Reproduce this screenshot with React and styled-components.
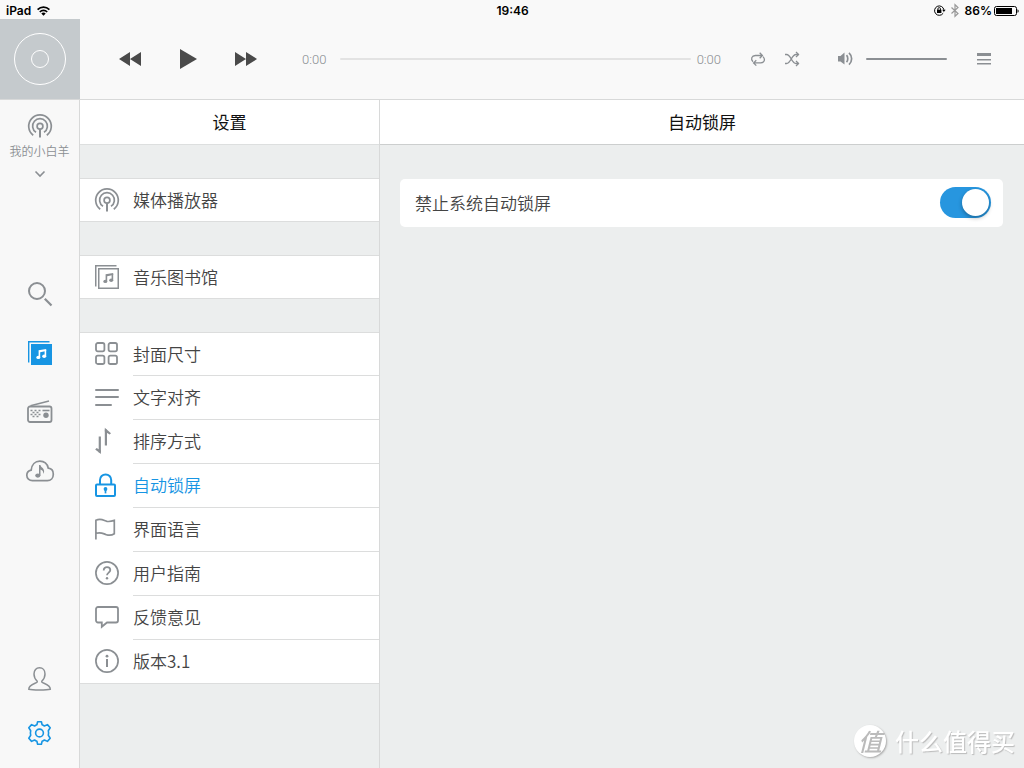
import React, { useState } from 'react';
import styled, { createGlobalStyle } from 'styled-components';

const GRAY = '#8b8f93';
const BLUE = '#1795e3';

/* ---------- icons ---------- */

const Icon = ({ w = 24, h = 24, sw = 2, children }) => (
    <svg width={w} height={h} viewBox={`0 0 ${w} ${h}`} fill="none" stroke="currentColor"
        strokeWidth={sw} overflow="visible" aria-hidden="true">
        {children}
    </svg>
);

const CastIcon = () => (
    <Icon sw={1.7}>
        <path d="M5.200 21.200A11.300 11.300 0 1 1 18.800 21.200" />
        <path d="M8 18.300A7.400 7.400 0 1 1 16 18.300" />
        <circle cx="12" cy="12.200" r="2.900" />
        <path d="M12 15v8.500" strokeWidth="2" />
    </Icon>
);

const NotePath = () => (
    <g stroke="none" fill="currentColor">
        <path d="M10.6 9.200L18.200 7.900v2.200l-6 1.200v5h-1.600z" />
        <path d="M16.600 9h1.600v6.200h-1.600z" />
        <ellipse cx="10.300" cy="16.400" rx="2" ry="1.700" />
        <ellipse cx="16.200" cy="15.200" rx="2" ry="1.700" />
    </g>
);

const AlbumIcon = () => (
    <Icon sw={1.5}>
        <path d="M.75 21.5V.75H21.5" />
        <rect x="3.75" y="3.75" width="19.5" height="19.5" />
        <NotePath />
    </Icon>
);

const AlbumFilledIcon = () => (
    <Icon sw={1.4}>
        <path d="M.7 21.5V.7H21.5" />
        <rect x="3" y="3" width="21" height="21" fill="currentColor" stroke="none" />
        <g color="#fff"><NotePath /></g>
    </Icon>
);

const GridIcon = () => (
    <Icon sw={1.8}>
        <rect x="1" y="1" width="8.4" height="8.4" rx="1.8" />
        <rect x="13.6" y="1" width="8.4" height="8.4" rx="1.8" />
        <rect x="1" y="13.6" width="8.4" height="8.4" rx="1.8" />
        <rect x="13.6" y="13.6" width="8.4" height="8.4" rx="1.8" />
    </Icon>
);

const AlignIcon = () => (
    <Icon>
        <path d="M1 5h22M1 12h22M1 20h15" strokeLinecap="round" />
    </Icon>
);

const SortIcon = () => (
    <Icon>
        <path d="M4.800 7.500v16" strokeWidth="2.200" />
        <path d="M5.900 25L.2 20.400l1.400-1.400 4.300 2.600z" fill="currentColor" stroke="none" />
        <path d="M10.900 16.500V.5" strokeWidth="2.200" />
        <path d="M9.800-1.200l6.200 5.400-1.400 1.400-4.800-3z" fill="currentColor" stroke="none" />
    </Icon>
);

const LockIcon = () => (
    <Icon>
        <rect x="1" y="11.5" width="19" height="11.5" rx="1" />
        <path d="M5 11V7a5.6 5.6 0 0 1 11.2 0v4" />
        <circle cx="10.5" cy="16" r="1.900" fill="currentColor" stroke="none" />
        <path d="M10.5 16v4.400" strokeWidth="1.700" />
    </Icon>
);

const FlagIcon = () => (
    <Icon sw={1.7}>
        <path d="M.9 22.4V3.2C6.5.8 9 3.8 12 4.400c2.600.4 5-.2 7.300-1v13.400c-2.500 1.600-5 1.800-8 .9-3-.9-5-3-10.200-1.400" />
    </Icon>
);

const HelpIcon = () => (
    <Icon sw={1.7}>
        <circle cx="12" cy="12" r="11.1" />
        <path d="M8.700 9.500C8.700 7.200 10.100 6.200 12 6.200s3.300 1.100 3.300 2.900c0 2.500-3.300 2.600-3.300 5.200" strokeWidth="1.8" />
        <circle cx="12" cy="17.300" r="1.200" fill="currentColor" stroke="none" />
    </Icon>
);

const ChatIcon = () => (
    <Icon sw={1.8}>
        <path d="M3 2h18a2 2 0 0 1 2 2v11.500a2 2 0 0 1-2 2H12l-5.200 4.300v-4.300H3a2 2 0 0 1-2-2V4a2 2 0 0 1 2-2z" />
    </Icon>
);

const InfoIcon = () => (
    <Icon sw={1.7}>
        <circle cx="12" cy="12" r="11.1" />
        <circle cx="12" cy="7.200" r="1.400" fill="currentColor" stroke="none" />
        <path d="M12 10v8" strokeWidth="2" />
    </Icon>
);

const SearchIcon = () => (
    <Icon>
        <circle cx="9" cy="9" r="8" />
        <path d="M16.800 16.800l6.700 6.700" strokeWidth="2.200" />
    </Icon>
);

const RadioIcon = () => (
    <Icon w={26} sw={1.8}>
        <path d="M3.500 5.800L22 1" strokeWidth="1.400" />
        <rect x="1" y="6.500" width="23.500" height="15.500" rx="2" />
        <path d="M3.500 10.500h10M3.500 14.500h10" strokeDasharray="2 2" strokeWidth="1.500" />
        <path d="M5.500 12.500h8M5.500 16.500h8" strokeDasharray="2 2" strokeWidth="1.500" />
        <path d="M15.500 10.500h7" strokeWidth="1.600" />
        <circle cx="19" cy="15.300" r="2.700" fill="currentColor" stroke="none" />
    </Icon>
);

const CloudIcon = () => (
    <Icon w={28} h={22} sw={1.7}>
        <path d="M6.500 20.700C3.200 20.700.8 18.400.8 15.300c0-2.700 1.800-4.700 4.400-5.200C5.700 4.700 9.200 1.200 13.800 1.200c4.300 0 7.500 2.700 8.500 7 3.100.3 5 2.900 5 6 0 3.700-2.500 6.500-6 6.500z" />
        <g stroke="none" fill="currentColor">
            <ellipse cx="11.800" cy="15.600" rx="2.600" ry="2.100" />
            <path d="M13 5h1.500c0 2.400 4 3 3.600 6.700-.1 1-.5 1.600-.9 2.100.3-2.200-.6-3.500-2.700-4.200v6H13z" />
        </g>
    </Icon>
);

const UserIcon = () => (
    <Icon sw={1.5}>
        <path d="M9.200 14.200C7 12.200 6 9.700 6 7c0-3.600 2.200-6.200 5.500-6.200S17 3.400 17 7c0 2.700-1 5.200-3.200 7.200v.8c.3 1.300 8.500 2 8.500 7.300-3.700 1-17.800 1-21.500 0 0-5.300 8.100-6 8.400-7.300z" />
    </Icon>
);

const GearIcon = () => (
    <Icon sw={1.6}>
        <circle cx="11.500" cy="12" r="3.900" />
        <path strokeLinejoin="round" d="M9.600.8h3.800l.7 3c.9.300 1.600.7 2.300 1.200l3-1.400 2.800 3.200-1.900 2.900c.4 1.500.4 3.100 0 4.600l1.900 2.900-2.800 3.200-3-1.400c-.7.5-1.400.9-2.300 1.200l-.7 3H9.600l-.7-3c-.9-.300-1.600-.7-2.300-1.200l-3 1.400L.8 17.200l1.900-2.900c-.4-1.500-.4-3.100 0-4.600L.8 6.800l2.800-3.200 3 1.400c.7-.5 1.400-.9 2.300-1.200z" />
    </Icon>
);

const ChevronIcon = () => (
    <Icon w={10} h={6} sw={1.600}><path d="M.5.5L5 5 9.500.5" /></Icon>
);

const RewindIcon = () => (
    <Icon w={22} h={14}><path d="M11 0v14L0 7zM22 0v14L11 7z" fill="currentColor" stroke="none" /></Icon>
);

const PlayIcon = () => (
    <Icon w={18} h={20}><path d="M1 0v20l17-10z" fill="currentColor" stroke="none" /></Icon>
);

const ForwardIcon = () => (
    <Icon w={22} h={14}><path d="M0 0v14L11 7zM11 0v14l11-7z" fill="currentColor" stroke="none" /></Icon>
);

const RepeatIcon = () => (
    <Icon w={14} h={14} sw={1.300}>
        <path d="M2 9.800C-.6 7 .6 3.500 4.400 3.500h6.800M8.700.8l2.700 2.700-2.700 2.700" />
        <path d="M12 4.600c2.600 2.800 1.400 6.300-2.400 6.300H2.800M5.300 8.200l-2.700 2.700 2.700 2.700" />
    </Icon>
);

const ShuffleIcon = () => (
    <Icon w={14} h={14} sw={1.300}>
        <path d="M0 2.500h1.500c4.500 0 5 9 9.500 9h2.500M0 11.500h1.500c4.500 0 5-9 9.500-9h2.500" />
        <path d="M11 0l2.500 2.500L11 5M11 9l2.500 2.500L11 14" />
    </Icon>
);

const VolumeIcon = () => (
    <Icon w={15} h={14} sw={1.700}>
        <path d="M0 4h2.500L6.500.5v12L2.500 9.500H0z" fill="currentColor" stroke="none" />
        <path d="M8.500 3.200c1.700 1.800 1.700 5.200 0 7M11 .8c3.500 3.200 3.500 8.600 0 11.800" />
    </Icon>
);

const QueueIcon = () => (
    <Icon w={14} h={12}>
        <path d="M0 0h14v3H0zM0 6h14v1.500H0zM0 10h14v1.500H0z" fill="currentColor" stroke="none" />
    </Icon>
);

const WifiIcon = () => (
    <Icon w={13} h={10} sw={1.700}>
        <path d="M.6 3.700c3.400-3.400 8.400-3.400 11.800 0M2.800 6c2.100-2.100 5.300-2.100 7.400 0" />
        <path d="M4.300 7.500c1.200-1.300 3.200-1.300 4.400 0L6.500 9.800z" fill="currentColor" stroke="none" />
    </Icon>
);

const RotationLockIcon = () => (
    <Icon w={11} h={11} sw={1}>
        <path d="M9.200 8.200A4.700 4.700 0 1 1 9.900 4.800" />
        <path d="M8.200 4.700h3.400L9.900 7z" fill="currentColor" stroke="none" />
        <rect x="3" y="4.700" width="4.400" height="3.300" fill="currentColor" stroke="none" />
        <path d="M3.900 5V3.900a1.300 1.300 0 0 1 2.600 0V5" strokeWidth=".9" />
    </Icon>
);

const BluetoothIcon = () => (
    <Icon w={8} h={13} sw={1.200}>
        <path d="M.5 3.500l6.500 6L4 12.300V.7L7 3.500l-6.500 6" />
    </Icon>
);

const BatteryIcon = () => (
    <Icon w={25} h={10} sw={1}>
        <rect x=".5" y=".5" width="22" height="9" rx="2" />
        <rect x="2" y="2" width="16" height="6" fill="currentColor" stroke="none" />
        <path d="M23.500 3.200c1.600.4 1.600 3.200 0 3.600z" fill="currentColor" stroke="none" />
    </Icon>
);

/* ---------- data ---------- */

const groups = [
    [{ id: 'player', label: '媒体播放器', icon: <CastIcon /> }],
    [{ id: 'library', label: '音乐图书馆', icon: <AlbumIcon /> }],
    [
        { id: 'cover', label: '封面尺寸', icon: <GridIcon /> },
        { id: 'align', label: '文字对齐', icon: <AlignIcon /> },
        { id: 'sort', label: '排序方式', icon: <SortIcon /> },
        { id: 'lock', label: '自动锁屏', icon: <LockIcon /> },
        { id: 'lang', label: '界面语言', icon: <FlagIcon /> },
        { id: 'guide', label: '用户指南', icon: <HelpIcon /> },
        { id: 'feedback', label: '反馈意见', icon: <ChatIcon /> },
        { id: 'version', label: '版本3.1', icon: <InfoIcon /> },
    ],
];

const App = () => {
    const [selected, setSelected] = useState('lock');
    const [noLock, setNoLock] = useState(true);
    const [position, setPosition] = useState(0);
    const [volume, setVolume] = useState(100);

    return (
        <Page>
            <GlobalStyle />
            <StatusBar>
                <StatusSide>iPad <WifiIcon /></StatusSide>
                <span>19:46</span>
                <StatusSide $end>
                    <RotationLockIcon />
                    <Faded><BluetoothIcon /></Faded>
                    <Battery>86%<BatteryIcon /></Battery>
                </StatusSide>
            </StatusBar>

            <Player>
                <Cover>
                    <svg width="52" height="52" viewBox="0 0 52 52" fill="none" stroke="#fff" aria-hidden="true">
                        <circle cx="26" cy="26" r="25.500" />
                        <circle cx="26" cy="26" r="8.500" />
                    </svg>
                </Cover>
                <Transport>
                    <IconButton aria-label="上一首"><RewindIcon /></IconButton>
                    <IconButton aria-label="播放"><PlayIcon /></IconButton>
                    <IconButton aria-label="下一首"><ForwardIcon /></IconButton>
                </Transport>
                <Progress>
                    <Time>0:00</Time>
                    <Slider $color="#e3e3e3" type="range" aria-label="进度" min="0" max="100"
                        value={position} onChange={(e) => setPosition(e.target.value)} />
                    <Time>0:00</Time>
                </Progress>
                <Modes>
                    <IconButton aria-label="循环"><RepeatIcon /></IconButton>
                    <IconButton aria-label="随机"><ShuffleIcon /></IconButton>
                </Modes>
                <Volume>
                    <VolumeIcon />
                    <Slider $color={GRAY} type="range" aria-label="音量" min="0" max="100"
                        value={volume} onChange={(e) => setVolume(e.target.value)} />
                </Volume>
                <IconButton aria-label="播放列表"><QueueIcon /></IconButton>
            </Player>

            <Body>
                <Sidebar>
                    <Device>
                        <CastIcon />
                        <DeviceName>我的小白羊</DeviceName>
                        <ChevronIcon />
                    </Device>
                    <Nav>
                        <NavButton aria-label="搜索"><SearchIcon /></NavButton>
                        <NavButton aria-label="音乐" $active><AlbumFilledIcon /></NavButton>
                        <NavButton aria-label="电台"><RadioIcon /></NavButton>
                        <NavButton aria-label="云音乐"><CloudIcon /></NavButton>
                    </Nav>
                    <Bottom>
                        <NavButton $small aria-label="用户"><UserIcon /></NavButton>
                        <NavButton $small $active aria-label="设置"><GearIcon /></NavButton>
                    </Bottom>
                </Sidebar>

                <Settings>
                    <Title>设置</Title>
                    {groups.map((items) => (
                        <Group key={items[0].id}>
                            {items.map((item) => (
                                <Item key={item.id}>
                                    <ItemLink href={`#${item.id}`} $active={item.id === selected}
                                        onClick={() => setSelected(item.id)}>
                                        {item.icon}
                                        <ItemLabel>{item.label}</ItemLabel>
                                    </ItemLink>
                                </Item>
                            ))}
                        </Group>
                    ))}
                </Settings>

                <Detail>
                    <Title $dark>自动锁屏</Title>
                    <Card>
                        <label htmlFor="no-lock">禁止系统自动锁屏</label>
                        <Switch id="no-lock" type="checkbox" checked={noLock}
                            onChange={(e) => setNoLock(e.target.checked)} />
                    </Card>
                </Detail>
            </Body>

            <Watermark>
                <Badge>值</Badge>
                什么值得买
            </Watermark>
        </Page>
    );
};

export default App;

const GlobalStyle = createGlobalStyle`
    * {
        box-sizing: border-box;
    }

    body {
        margin: 0;
        font-family: "Noto Sans CJK SC", sans-serif;
        color: #444;
        background: #eceeee;
    }

    button {
        padding: 0;
        border: 0;
        background: none;
        font: inherit;
        color: inherit;
        cursor: pointer;
    }

    svg {
        display: block;
        flex: none;
    }
`;

const Page = styled.div`
    display: flex;
    flex-direction: column;
    min-height: 100vh;
`;

const StatusBar = styled.div`
    display: flex;
    align-items: center;
    height: 19px;
    padding: 2px 5px 0 6px;
    background: #f9f9f9;
    color: #000;
    font-family: Inter, sans-serif;
    font-size: 12px;
    font-weight: 600;
    line-height: 16px;
`;

const StatusSide = styled.div`
    flex: 1;
    display: flex;
    align-items: center;
    justify-content: ${({ $end }) => ($end ? 'flex-end' : 'flex-start')};
    gap: 6px;
`;

const Faded = styled.span`
    color: #999;
`;

const Battery = styled.span`
    display: flex;
    align-items: center;
    gap: 2px;
`;

const Player = styled.header`
    display: flex;
    align-items: center;
    height: 81px;
    padding-right: 33px;
    border-bottom: 1px solid #d8d9d9;
    background: #f9f9f9;
    color: ${GRAY};
`;

const Cover = styled.div`
    display: flex;
    align-items: center;
    justify-content: center;
    width: 80px;
    height: 80px;
    background: #c5cacd;
`;

const IconButton = styled.button`
    display: flex;
    align-items: center;
    justify-content: center;
`;

const Transport = styled.div`
    display: flex;
    align-items: center;
    gap: 38px;
    margin: 0 45px 0 39px;
    color: #4a4a4a;
`;

const Progress = styled.div`
    flex: 1;
    display: flex;
    align-items: center;
`;

const Time = styled.span`
    font-family: Roboto, sans-serif;
    font-size: 13px;
    font-weight: 300;

    &:first-child {
        margin-right: 14px;
    }

    &:last-child {
        margin-left: 6px;
    }
`;

const Slider = styled.input`
    appearance: none;
    flex: 1;
    min-width: 0;
    height: 2px;
    margin: 0;
    border-radius: 1px;
    background: ${({ $color }) => $color};

    &::-webkit-slider-thumb {
        appearance: none;
        width: 1px;
        height: 2px;
        background: transparent;
    }
`;

const Modes = styled.div`
    display: flex;
    gap: 20px;
    margin: 0 39px 0 30px;
`;

const Volume = styled.div`
    display: flex;
    align-items: center;
    gap: 13px;
    width: 109px;
    margin-right: 30px;
`;

const Body = styled.div`
    flex: 1;
    display: flex;
`;

const Sidebar = styled.aside`
    display: flex;
    flex-direction: column;
    width: 80px;
    padding: 14px 0 8px;
    border-right: 1px solid #d8d9d9;
    background: #f8f8f8;
    color: ${GRAY};
`;

const Device = styled.button`
    display: flex;
    flex-direction: column;
    align-items: center;
`;

const DeviceName = styled.span`
    margin: 4px 0 12px;
    font-size: 12px;
    font-weight: 350;
    line-height: 17px;
`;

const Nav = styled.nav`
    display: flex;
    flex-direction: column;
    margin-top: 87px;
`;

const Bottom = styled.div`
    display: flex;
    flex-direction: column;
    margin-top: auto;
`;

const NavButton = styled.button`
    display: flex;
    align-items: center;
    justify-content: center;
    height: ${({ $small }) => ($small ? '54px' : '59px')};
    color: ${({ $active }) => ($active ? BLUE : GRAY)};
`;

const Settings = styled.section`
    width: 300px;
    border-right: 1px solid #d8d9d9;
`;

const Title = styled.h1`
    height: 45px;
    margin: 0;
    border-bottom: 1px solid ${({ $dark }) => ($dark ? '#cccece' : '#dddfdf')};
    background: #fff;
    color: #111;
    font-size: 17px;
    font-weight: 400;
    line-height: 44px;
    text-align: center;
`;

const Group = styled.ul`
    margin: 33px 0 0;
    padding: 0;
    border: 1px solid #dcdddd;
    border-width: 1px 0;
    background: #fff;
    list-style: none;
`;

const Item = styled.li`
    height: 44px;

    &:first-child {
        height: 42px;
    }
`;

const ItemLabel = styled.span`
    flex: 1;
    display: flex;
    align-items: center;
    align-self: stretch;
    padding-bottom: 2px;

    ${Item} + ${Item} & {
        border-top: 1px solid #dcdddd;
    }
`;

const ItemLink = styled.a`
    display: flex;
    align-items: center;
    gap: 14px;
    height: 100%;
    padding-left: 15px;
    color: ${({ $active }) => ($active ? BLUE : '#444')};
    font-size: 17px;
    font-weight: 350;
    text-decoration: none;

    svg {
        width: 24px;
        color: ${({ $active }) => ($active ? BLUE : GRAY)};
    }
`;

const Detail = styled.main`
    flex: 1;
`;

const Card = styled.div`
    display: flex;
    align-items: center;
    justify-content: space-between;
    height: 48px;
    margin: 34px 21px 0 20px;
    padding: 0 12px 2px 15px;
    border-radius: 5px;
    background: #fff;
    font-size: 17px;
    font-weight: 350;
`;

const Switch = styled.input`
    appearance: none;
    display: flex;
    align-items: center;
    width: 51px;
    height: 31px;
    margin: 0;
    padding: 2px;
    border-radius: 16px;
    background: #ddd;

    &::before {
        content: '';
        width: 27px;
        height: 27px;
        border-radius: 50%;
        background: #fff;
        box-shadow: 0 2px 4px rgba(0, 0, 0, 0.3);
    }

    &:checked {
        justify-content: flex-end;
        background: #2796df;
    }
`;

/* floats over the bottom right corner */
const Watermark = styled.div`
    position: fixed;
    right: 9px;
    bottom: 11px;
    display: flex;
    align-items: center;
    gap: 9px;
    color: #fff;
    font-size: 24px;
    font-weight: 500;
    line-height: 32px;
    text-shadow: 1px 1px 1px #bbb;
    pointer-events: none;
`;

const Badge = styled.span`
    width: 32px;
    height: 32px;
    border-radius: 50%;
    background: #fff;
    box-shadow: 1px 1px 2px #aaa;
    color: #bbb;
    font-weight: 500;
    font-style: italic;
    text-align: center;
    text-shadow: none;
`;
